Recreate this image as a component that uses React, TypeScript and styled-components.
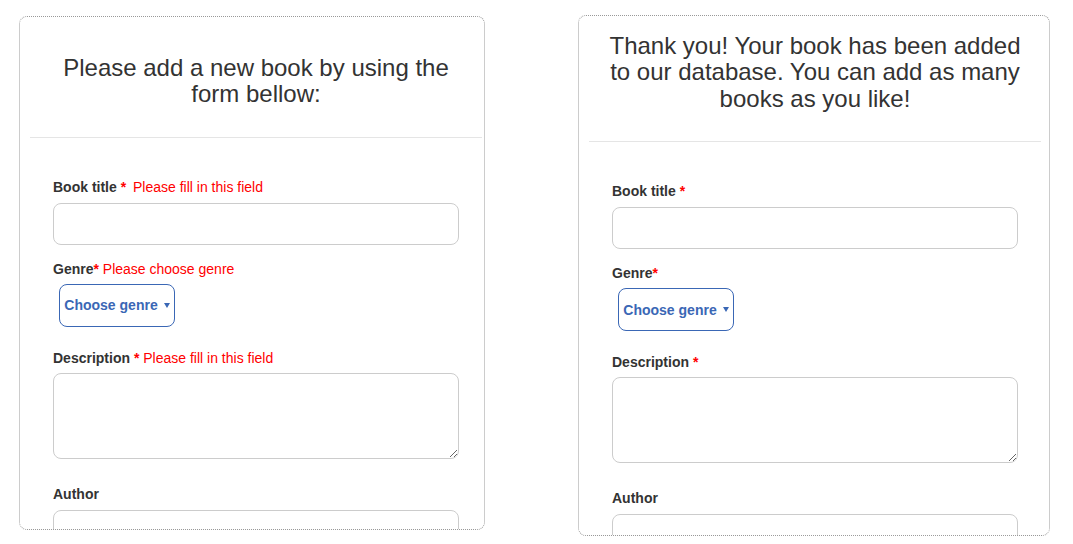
import React from "react";
import styled, { createGlobalStyle } from "styled-components";

const GlobalStyle = createGlobalStyle`
  html, body { margin: 0; padding: 0; background: #fff; }
  body { font-family: "Liberation Sans", Arial, Helvetica, sans-serif; color: #333; font-size: 14px; }
  * { box-sizing: border-box; }
`;

const Page = styled.div`
  display: flex;
  align-items: flex-start;
  gap: 93px;
  padding: 15px 0 0 19px;
`;

const Card = styled.section<{ $w: number; $h: number; $top: number }>`
  flex-shrink: 0;
  width: ${(p) => p.$w}px;
  height: ${(p) => p.$h}px;
  margin-top: ${(p) => p.$top}px;
  border: 1px dotted #999;
  border-radius: 8px;
  overflow: hidden;
  background: #fff;
`;

const Inner = styled.div`
  width: 472px;
  padding: 0 10px;
`;

const Header = styled.header<{ $pt: number }>`
  padding: ${(p) => p.$pt}px 15px 29px;
  border-bottom: 1px solid #e5e5e5;
`;

const Heading = styled.h3`
  margin: 0;
  font-size: 24px;
  line-height: 26.4px;
  font-weight: 400;
  text-align: center;
  color: #333;
`;

const Form = styled.form`
  padding: 39px 0 0 23px;
`;

const Group = styled.div<{ $mb: number }>`
  margin-bottom: ${(p) => p.$mb}px;
`;

const Label = styled.label`
  display: block;
  font-weight: 700;
  font-size: 14px;
  line-height: 20px;
  color: #333;
`;

const Star = styled.span`
  color: #f00;
`;

const ErrorText = styled.span<{ $ml: number }>`
  color: #f00;
  font-weight: 400;
  margin-left: ${(p) => p.$ml}px;
`;

const TextInput = styled.input`
  display: block;
  width: 406px;
  height: 42px;
  margin-top: 6px;
  border: 1px solid #ccc;
  border-radius: 8px;
  padding: 6px 12px;
  font: inherit;
  background: #fff;
`;

const TextArea = styled.textarea`
  display: block;
  width: 406px;
  height: 86px;
  margin-top: 5px;
  border: 1px solid #ccc;
  border-radius: 8px;
  padding: 6px 12px;
  font: inherit;
  resize: vertical;
  background: #fff;
`;

const GenreButton = styled.button`
  display: flex;
  align-items: center;
  justify-content: center;
  width: 116px;
  height: 43px;
  margin: 5px 0 0 6px;
  padding: 0;
  border: 1px solid #3a67b5;
  border-radius: 8px;
  background: #fff;
  color: #3a67b5;
  font-family: "Liberation Sans", Arial, sans-serif;
  font-weight: 700;
  font-size: 14px;
  cursor: pointer;
`;

const Caret = styled.span`
  display: inline-block;
  margin-left: 6px;
  width: 0;
  height: 0;
  border-top: 5px solid #3a67b5;
  border-left: 3px solid transparent;
  border-right: 3px solid transparent;
`;

type BookFormProps = { errors: boolean };

const BookForm: React.FC<BookFormProps> = ({ errors }) => (
  <Form onSubmit={(e) => e.preventDefault()}>
    <Group $mb={14}>
      <Label>
        Book title <Star>*</Star>
        {errors && <ErrorText $ml={3}> Please fill in this field</ErrorText>}
      </Label>
      <TextInput type="text" />
    </Group>
    <Group $mb={21}>
      <Label>
        Genre<Star>*</Star>
        {errors && <ErrorText $ml={0}> Please choose genre</ErrorText>}
      </Label>
      <GenreButton type="button">
        Choose genre<Caret />
      </GenreButton>
    </Group>
    <Group $mb={25}>
      <Label>
        Description <Star>*</Star>
        {errors && <ErrorText $ml={0}> Please fill in this field</ErrorText>}
      </Label>
      <TextArea />
    </Group>
    <Group $mb={15}>
      <Label>Author</Label>
      <TextInput type="text" />
    </Group>
  </Form>
);

export default function App() {
  return (
    <>
      <GlobalStyle />
      <Page>
        <Card $w={466} $h={514} $top={1}>
          <Inner>
            <Header $pt={38}>
              <Heading>Please add a new book by using the form bellow:</Heading>
            </Header>
            <BookForm errors />
          </Inner>
        </Card>
        <Card $w={472} $h={521} $top={0}>
          <Inner>
            <Header $pt={17}>
              <Heading>
                Thank you! Your book has been added to our database. You can add as many books as you like!
              </Heading>
            </Header>
            <BookForm errors={false} />
          </Inner>
        </Card>
      </Page>
    </>
  );
}
